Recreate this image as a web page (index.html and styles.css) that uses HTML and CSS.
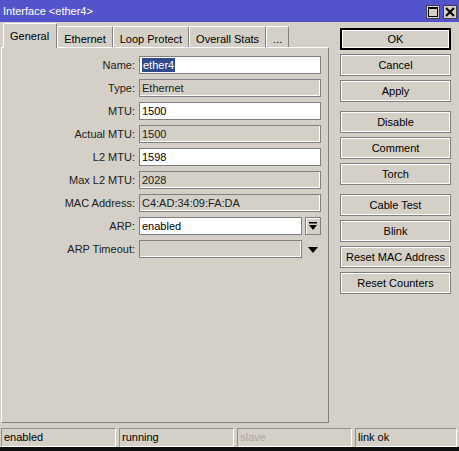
FILE: index.html
```html
<!DOCTYPE html>
<html lang="en">
<head>
    <meta charset="UTF-8">
    <title>Interface &lt;ether4&gt;</title>
    <link rel="stylesheet" href="styles.css">
</head>
<body>
    <div class="window">
        <div class="titlebar">
            <span class="title">Interface &lt;ether4&gt;</span>
            <div class="title-btns">
                <span class="tbtn">
                    <svg width="12" height="12" viewBox="0 0 12 12"><rect x="1.5" y="1.5" width="9" height="9" fill="none" stroke="#000" stroke-width="1"/><rect x="1" y="1" width="10" height="2" fill="#000"/></svg>
                </span>
                <span class="tbtn">
                    <svg width="12" height="12" viewBox="0 0 12 12"><path d="M2 2 L10 10 M10 2 L2 10" stroke="#000" stroke-width="2.2"/></svg>
                </span>
            </div>
        </div>

        <div class="main">
            <div class="left">
                <div class="tabs">
                    <div class="tab active">General</div>
                    <div class="tab">Ethernet</div>
                    <div class="tab">Loop Protect</div>
                    <div class="tab">Overall Stats</div>
                    <div class="tab">...</div>
                </div>
                <div class="panel">
                    <div class="form">
                        <label>Name:</label>
                        <div class="field"><span class="sel">ether4</span></div>

                        <label>Type:</label>
                        <div class="field ro">Ethernet</div>

                        <label>MTU:</label>
                        <div class="field">1500</div>

                        <label>Actual MTU:</label>
                        <div class="field ro">1500</div>

                        <label>L2 MTU:</label>
                        <div class="field">1598</div>

                        <label>Max L2 MTU:</label>
                        <div class="field ro">2028</div>

                        <label>MAC Address:</label>
                        <div class="field ro">C4:AD:34:09:FA:DA</div>

                        <label>ARP:</label>
                        <div class="combo">
                            <div class="field">enabled</div>
                            <span class="drop">
                                <svg width="10" height="10" viewBox="0 0 10 10"><rect x="1" y="1" width="8" height="1.5" fill="#000"/><path d="M1 4 H9 L5 9 Z" fill="#000"/></svg>
                            </span>
                        </div>

                        <label>ARP Timeout:</label>
                        <div class="combo">
                            <div class="field ro"></div>
                            <span class="arrow">
                                <svg width="12" height="8" viewBox="0 0 12 8"><path d="M1 1 H11 L6 7 Z" fill="#000"/></svg>
                            </span>
                        </div>
                    </div>
                </div>
            </div>

            <div class="right">
                <div class="btn-group">
                    <button class="btn default">OK</button>
                    <button class="btn">Cancel</button>
                    <button class="btn">Apply</button>
                </div>
                <div class="btn-group">
                    <button class="btn">Disable</button>
                    <button class="btn">Comment</button>
                    <button class="btn">Torch</button>
                </div>
                <div class="btn-group">
                    <button class="btn">Cable Test</button>
                    <button class="btn">Blink</button>
                    <button class="btn">Reset MAC Address</button>
                    <button class="btn">Reset Counters</button>
                </div>
            </div>
        </div>

        <div class="statusbar">
            <div class="cell">enabled</div>
            <div class="cell">running</div>
            <div class="cell dim">slave</div>
            <div class="cell last">link ok</div>
        </div>
        <div class="bottom-edge"></div>
    </div>
</body>
</html>
```

FILE: styles.css
```css
body {
    margin: 0;
    font-family: "Liberation Sans", Arial, sans-serif;
    font-size: 11px;
    color: #000;
    background-color: #d4d0c8;
}
.window {
    width: 459px;
    height: 451px;
    display: flex;
    flex-direction: column;
    background-color: #d4d0c8;
    overflow: hidden;
}
.titlebar {
    height: 22px;
    flex: none;
    display: flex;
    align-items: center;
    justify-content: space-between;
    padding: 0 2px 0 3px;
    background-color: #5353cc;
    color: #fff;
}
.title {
    font-size: 11px;
}
.title-btns {
    display: flex;
    gap: 3px;
    margin-top: 1px;
}
.tbtn {
    width: 14px;
    height: 14px;
    box-sizing: border-box;
    border: 1px solid #404040;
    background-color: #d4d0c8;
    display: flex;
    align-items: center;
    justify-content: center;
}
.main {
    display: flex;
    height: 402px;
    flex: none;
}
.left {
    width: 329px;
    display: flex;
    flex-direction: column;
}
.tabs {
    display: flex;
    align-items: flex-end;
    height: 24px;
    margin-top: 2px;
    padding-left: 3px;
    margin-bottom: -1px;
}
.tab {
    height: 22px;
    box-sizing: border-box;
    padding: 5px 6px 0;
    line-height: 14px;
    border-top: 1px solid #fff;
    border-left: 1px solid #fff;
    border-right: 1px solid #808080;
    border-radius: 2px 2px 0 0;
    background-color: #d4d0c8;
    white-space: nowrap;
}
.tab.active {
    height: 25px;
    padding-top: 5px;
    padding-right: 7px;
    position: relative;
    z-index: 1;
}
.panel {
    margin-left: 1px;
    height: 376px;
    box-sizing: border-box;
    border: 1px solid;
    border-color: #fff #808080 #808080 #fff;
    padding-top: 8px;
}
.form {
    display: grid;
    grid-template-columns: 133px 182px;
    column-gap: 4px;
    row-gap: 5px;
    grid-auto-rows: 18px;
}
.form label {
    text-align: right;
    line-height: 18px;
    color: #202020;
}
.field {
    height: 18px;
    box-sizing: border-box;
    border: 1px solid #808080;
    box-shadow: inset -1px -1px 0 #fff;
    background-color: #fff;
    padding-left: 2px;
    line-height: 16px;
    white-space: nowrap;
}
.field.ro {
    background-color: #d4d0c8;
    color: #202020;
}
.sel {
    background-color: #2e4a8a;
    color: #fff;
    padding: 1px 1px;
}
.combo {
    display: flex;
    gap: 3px;
    align-items: center;
}
.combo .field {
    width: 163px;
}
.drop {
    width: 16px;
    height: 18px;
    box-sizing: border-box;
    border: 1px solid #808080;
    box-shadow: inset 1px 1px 0 #fff;
    display: flex;
    align-items: center;
    justify-content: center;
}
.arrow {
    width: 16px;
    display: flex;
    justify-content: center;
    padding-top: 1px;
}
.right {
    margin-left: 11px;
    padding-top: 6px;
    display: flex;
    flex-direction: column;
    gap: 9px;
}
.btn-group {
    display: flex;
    flex-direction: column;
    gap: 4px;
}
.btn {
    width: 111px;
    height: 22px;
    box-sizing: border-box;
    border: 1px solid #808080;
    box-shadow: inset 0 0 0 1px #fff;
    background-color: #d4d0c8;
    font-family: "Liberation Sans", Arial, sans-serif;
    font-size: 11px;
    color: #000;
    padding: 0;
}
.btn.default {
    border: 1px solid #000;
    box-shadow: inset 0 0 0 1px #000, inset 0 0 0 2px #fff;
}
.statusbar {
    display: flex;
    gap: 3px;
    margin-top: 4px;
    padding-left: 1px;
    height: 19px;
    flex: none;
}
.cell {
    width: 115px;
    box-sizing: border-box;
    border: 1px solid;
    border-color: #909090 #fff #fff #909090;
    padding-left: 2px;
    line-height: 17px;
}
.cell.last {
    width: 102px;
}
.cell.dim {
    color: #a9a9a9;
}
.bottom-edge {
    height: 4px;
    flex: none;
    background-color: #101010;
}
```
